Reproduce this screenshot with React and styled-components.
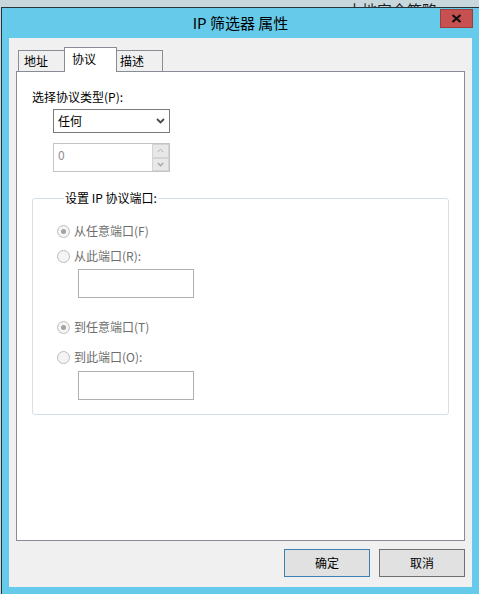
import React from 'react'
import styled, { createGlobalStyle } from 'styled-components'

const ui = `"Noto Sans CJK SC", "Microsoft YaHei UI", sans-serif`

const GlobalStyle = createGlobalStyle`
  html, body {
    margin: 0;
    padding: 0;
    background: #c7d7dc;
  }
  body {
    font-family: ${ui};
    font-size: 12px;
    color: #000;
  }
`

const Desktop = styled.div`
  width: 479px;
  height: 594px;
  overflow: hidden;
  display: flex;
  flex-direction: column;
  background: #c7d7dc;
`

const BackStrip = styled.div`
  height: 7px;
  overflow: hidden;
  padding-left: 347px;
  font-size: 15px;
  line-height: 15px;
  color: #1e1e1e;

  span {
    display: block;
    margin-top: 2px;
  }
`

const WindowRow = styled.div`
  flex: 1;
  display: flex;
  padding-left: 1px;
`

const Window = styled.div`
  flex: 1;
  display: flex;
  flex-direction: column;
  background: #66cbea;
  border-left: 1px solid #26343b;
  border-top: 1px solid #26343b;
  padding: 0 7px 7px 7px;
`

const TitleBar = styled.div`
  height: 30px;
  display: grid;
  grid-template-columns: 1fr auto 1fr;
  align-items: center;
`

const Title = styled.div`
  grid-column: 2;
  font-size: 15px;
  line-height: 20px;
  color: #000;
`

const CloseButton = styled.div`
  grid-column: 3;
  justify-self: end;
  align-self: start;
  margin-top: 1px;
  margin-right: -1px;
  width: 33px;
  height: 19px;
  box-sizing: border-box;
  background: #c75050;
  border: 1px solid #9b3e3e;
  display: flex;
  align-items: center;
  justify-content: center;
`

const Client = styled.div`
  flex: 1;
  display: flex;
  flex-direction: column;
  background: #f0f0f0;
  padding: 9px 7px 10px 7px;
`

const TabStrip = styled.div`
  height: 24px;
  display: flex;
  align-items: flex-end;
  padding-left: 2px;
`

const Tab = styled.div`
  position: relative;
  box-sizing: border-box;
  width: ${p => p.$w}px;
  height: ${p => (p.$active ? 25 : 21)}px;
  margin-left: ${p => (p.$first ? 0 : -1)}px;
  margin-bottom: ${p => (p.$active ? -1 : 0)}px;
  z-index: ${p => (p.$active ? 2 : 1)};
  border: 1px solid #898c95;
  border-bottom: none;
  background: ${p => (p.$active ? '#fff' : '#f0f0f0')};
  display: flex;
  align-items: center;
  padding-left: ${p => p.$pad}px;
  padding-bottom: ${p => (p.$active ? 3 : 0)}px;
  line-height: 16px;
`

const Panel = styled.div`
  flex: 1;
  background: #fff;
  border: 1px solid #898c95;
  padding: 17px 15px 0 15px;
  display: flex;
  flex-direction: column;
  align-items: flex-start;
`

const Label = styled.div`
  line-height: 16px;
`

const Select = styled.div`
  margin: 4px 0 0 21px;
  box-sizing: border-box;
  width: 117px;
  height: 24px;
  border: 1px solid #7a7a7a;
  background: #fff;
  display: flex;
  align-items: center;
  justify-content: space-between;
  padding: 0 4px 0 4px;
  line-height: 16px;
`

const SpinBox = styled.div`
  margin: 10px 0 0 21px;
  box-sizing: border-box;
  width: 117px;
  height: 29px;
  border: 1px solid #c4c4c4;
  background: #fff;
  display: flex;
`

const SpinValue = styled.div`
  flex: 1;
  padding: 3px 0 0 4px;
  line-height: 16px;
  color: #8d8d8d;
`

const SpinButtons = styled.div`
  width: 17px;
  display: flex;
  flex-direction: column;
`

const SpinButton = styled.div`
  flex: 1;
  box-sizing: border-box;
  background: #e8e8e8;
  border: 1px solid #d4d4d4;
  margin-top: ${p => (p.$down ? 0 : 0)}px;
  display: flex;
  align-items: center;
  justify-content: center;
`

const Group = styled.fieldset`
  margin: 18px 0 0 0;
  padding: 15px 0 14px 24px;
  align-self: stretch;
  border: 1px solid #d5dfe5;
  border-radius: 3px;
  min-width: 0;
  display: flex;
  flex-direction: column;
  align-items: flex-start;
`

const Legend = styled.legend`
  margin-left: 7px;
  padding: 0 1px;
  line-height: 16px;
  color: #000;
`

const RadioRow = styled.div`
  height: 20px;
  margin-top: ${p => p.$mt || 0}px;
  display: flex;
  align-items: center;
  gap: 4px;
  color: #6d6d6d;
  line-height: 16px;
`

const RadioDot = styled.span`
  box-sizing: border-box;
  width: 13px;
  height: 13px;
  border-radius: 50%;
  border: 1px solid #bcbcbc;
  background: #f4f4f4;
  display: flex;
  align-items: center;
  justify-content: center;

  &::after {
    content: '';
    width: 5px;
    height: 5px;
    border-radius: 50%;
    background: ${p => (p.$checked ? '#a3a3a3' : 'transparent')};
  }
`

const PortInput = styled.div`
  margin: ${p => p.$mt}px 0 0 21px;
  box-sizing: border-box;
  width: 116px;
  height: 29px;
  border: 1px solid #abb0b3;
  background: #fff;
`

const ButtonBar = styled.div`
  display: flex;
  justify-content: flex-end;
  gap: 9px;
  margin-top: 8px;
`

const Button = styled.div`
  box-sizing: border-box;
  width: 86px;
  height: 28px;
  background: #e1e1e1;
  border: 1px solid ${p => (p.$default ? '#3c7fb1' : '#707070')};
  display: flex;
  align-items: center;
  justify-content: center;
  line-height: 16px;
`

const Chevron = ({ up, color = '#555', w = 9, h = 6 }) => (
  <svg width={w} height={h} viewBox="0 0 9 6">
    <path
      d={up ? 'M1 5 L4.5 1.5 L8 5' : 'M1 1 L4.5 4.5 L8 1'}
      fill="none"
      stroke={color}
      strokeWidth={up ? 1.2 : 1.8}
    />
  </svg>
)

const CloseGlyph = () => (
  <svg width="11" height="9" viewBox="0 0 11 9">
    <path d="M1.5 1 L9.5 8 M9.5 1 L1.5 8" stroke="#111" strokeWidth="2.2" />
  </svg>
)

const tabs = [
  { label: '地址', w: 47, pad: 5 },
  { label: '协议', w: 53, pad: 7, active: true },
  { label: '描述', w: 47, pad: 3 }
]

export default function App() {
  return (
    <>
      <GlobalStyle />
      <Desktop>
        <BackStrip>
          <span>本地安全策略</span>
        </BackStrip>
        <WindowRow>
          <Window>
            <TitleBar>
              <Title>IP 筛选器 属性</Title>
              <CloseButton>
                <CloseGlyph />
              </CloseButton>
            </TitleBar>
            <Client>
              <TabStrip>
                {tabs.map((t, i) => (
                  <Tab
                    key={t.label}
                    $w={t.w}
                    $pad={t.pad}
                    $active={t.active}
                    $first={i === 0}
                  >
                    {t.label}
                  </Tab>
                ))}
              </TabStrip>
              <Panel>
                <Label>选择协议类型(P):</Label>
                <Select>
                  <span>任何</span>
                  <Chevron color="#4a4a4a" />
                </Select>
                <SpinBox>
                  <SpinValue>0</SpinValue>
                  <SpinButtons>
                    <SpinButton>
                      <Chevron up color="#a8a8a8" w={7} h={5} />
                    </SpinButton>
                    <SpinButton $down>
                      <Chevron color="#a8a8a8" w={7} h={5} />
                    </SpinButton>
                  </SpinButtons>
                </SpinBox>
                <Group>
                  <Legend>设置 IP 协议端口:</Legend>
                  <RadioRow>
                    <RadioDot $checked />
                    从任意端口(F)
                  </RadioRow>
                  <RadioRow $mt={5}>
                    <RadioDot />
                    从此端口(R):
                  </RadioRow>
                  <PortInput $mt={3} />
                  <RadioRow $mt={19}>
                    <RadioDot $checked />
                    到任意端口(T)
                  </RadioRow>
                  <RadioRow $mt={10}>
                    <RadioDot />
                    到此端口(O):
                  </RadioRow>
                  <PortInput $mt={4} />
                </Group>
              </Panel>
              <ButtonBar>
                <Button $default>确定</Button>
                <Button>取消</Button>
              </ButtonBar>
            </Client>
          </Window>
        </WindowRow>
      </Desktop>
    </>
  )
}
